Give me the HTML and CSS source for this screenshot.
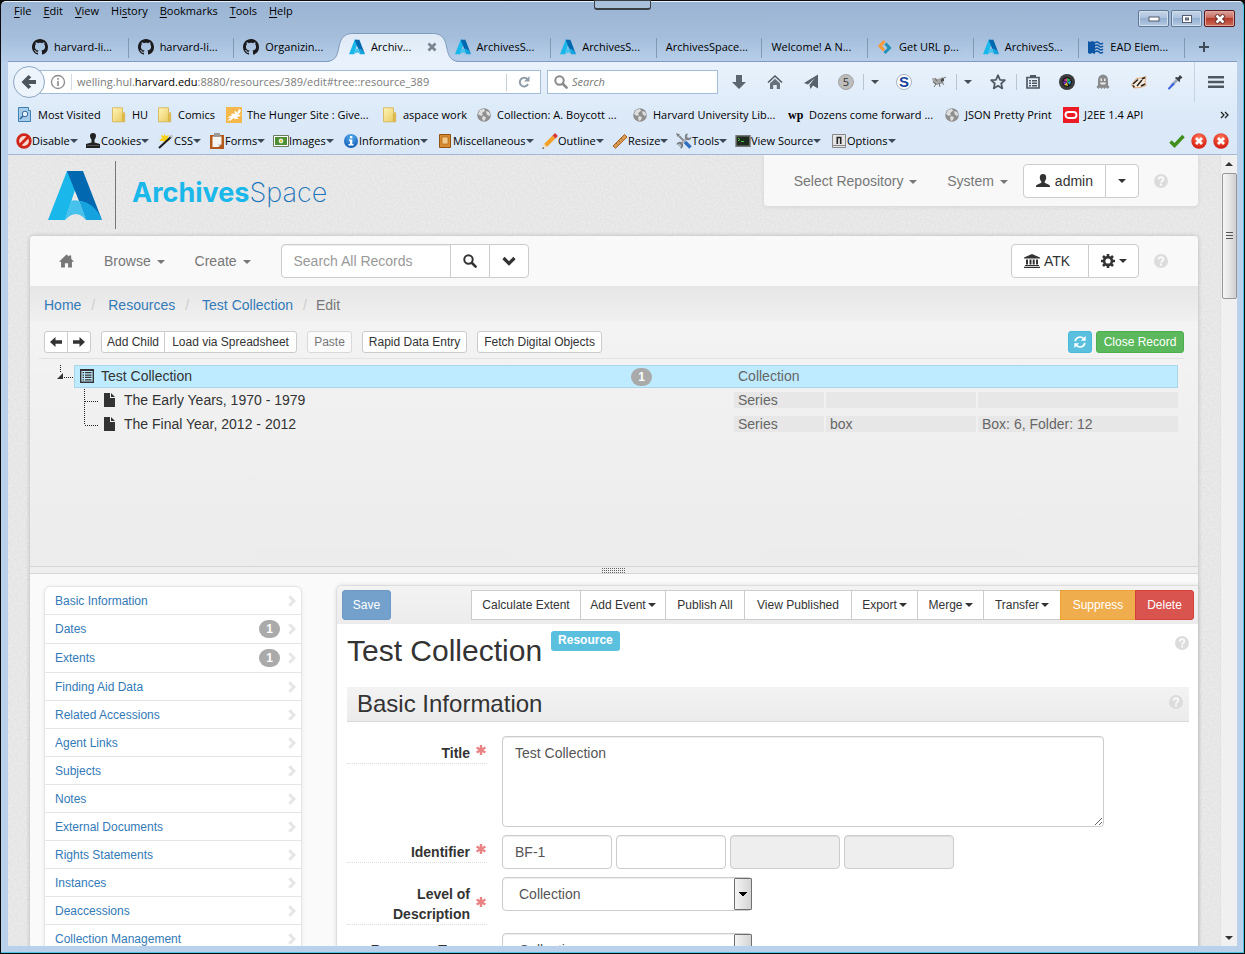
FILE: index.html
```html
<!DOCTYPE html>
<html lang="en">
<head>
<meta charset="utf-8">
<title>ArchivesSpace</title>
<link rel="stylesheet" href="styles.css">
</head>
<body>
<svg class="sprite" aria-hidden="true">
  <defs>
    <linearGradient id="g-tab" x1="0" y1="0" x2="0" y2="1"><stop offset="0" stop-color="#dfeaf6"/><stop offset="1" stop-color="#e9f2fc"/></linearGradient>
    <linearGradient id="g-folder" x1="0" y1="0" x2="1" y2="1"><stop offset="0" stop-color="#fff5b8"/><stop offset="1" stop-color="#e8c95a"/></linearGradient>
    <radialGradient id="g-red" cx=".5" cy=".3" r=".7"><stop offset="0" stop-color="#ff7a5c"/><stop offset="1" stop-color="#d3170c"/></radialGradient>
    <radialGradient id="g-info" cx=".5" cy=".25" r=".8"><stop offset="0" stop-color="#58aef0"/><stop offset="1" stop-color="#0a55ae"/></radialGradient>
  </defs>
  <symbol id="i-github" viewBox="0 0 16 16"><path fill="#1b1a1c" d="M8 0C3.58 0 0 3.58 0 8c0 3.54 2.29 6.53 5.47 7.59.4.07.55-.17.55-.38 0-.19-.01-.82-.01-1.49-2.01.37-2.53-.49-2.69-.94-.09-.23-.48-.94-.82-1.13-.28-.15-.68-.52-.01-.53.63-.01 1.08.58 1.23.82.72 1.21 1.87.87 2.33.66.07-.52.28-.87.51-1.07-1.78-.2-3.64-.89-3.64-3.95 0-.87.31-1.59.82-2.15-.08-.2-.36-1.02.08-2.12 0 0 .67-.21 2.2.82.64-.18 1.32-.27 2-.27s1.36.09 2 .27c1.53-1.04 2.2-.82 2.2-.82.44 1.1.16 1.92.08 2.12.51.56.82 1.27.82 2.15 0 3.07-1.87 3.75-3.65 3.95.29.25.54.73.54 1.48 0 1.07-.01 1.93-.01 2.2 0 .21.15.46.55.38A8.01 8.01 0 0016 8c0-4.42-3.58-8-8-8z"/></symbol>
  <symbol id="i-aspace" viewBox="0 0 54 49"><path fill="#1ab7ea" d="M19 0h8v19L17 49H0z"/><path fill="#0268b0" d="M19 0h16l19 49C48 39 41 31 31 30z"/><path fill="#46c2ec" d="M23 30q4-1.500 8 0l7 19q-10-12-21 0z"/><path fill="#14a3df" d="M31 29.800C41 31 49 37 54 49H38z"/></symbol>
  <symbol id="i-close" viewBox="0 0 10 10"><path stroke="#77838f" stroke-width="2.6" d="M1.500 1.500l7 7M8.500 1.500l-7 7"/></symbol>
  <symbol id="i-geturl" viewBox="0 0 16 16"><path fill="none" stroke="#f79a3a" stroke-width="3" d="M7.500 2L3 7l4 4.500"/><path fill="none" stroke="#2390b8" stroke-width="3" d="M8.500 4.500l4 4.500-5 5"/></symbol>
  <symbol id="i-ead" viewBox="0 0 16 16"><path fill="#0d56a5" d="M0 2l2 1 2-1 3 1v12l-3-1-2 1-2-1z"/><path fill="none" stroke="#0d56a5" stroke-width="1.500" d="M7 4q2-2 4 0t4 0M7 7q2-2 4 0t4 0M7 10q2-2 4 0t4 0M7 13q2-2 4 0t4 0"/></symbol>
  <symbol id="i-plus" viewBox="0 0 12 12"><path stroke="#3e4a59" stroke-width="2" d="M6 1v10M1 6h10"/></symbol>
  <symbol id="i-back" viewBox="0 0 16 16"><path fill="#4c545c" d="M7.500 1l2.800 2.200L7.500 6H15v4H7.500l2.800 2.800L7.500 15l-7-7z"/></symbol>
  <symbol id="i-ident" viewBox="0 0 16 16"><circle cx="8" cy="8" r="6.500" fill="none" stroke="#8b8b8b" stroke-width="1.300"/><path stroke="#8b8b8b" stroke-width="1.600" d="M8 7v5M8 4v1.800"/></symbol>
  <symbol id="i-reload" viewBox="0 0 12 12"><path fill="none" stroke="#909ca8" stroke-width="2" d="M9.500 3.500A4.300 4.300 0 1 0 10 8"/><path fill="#909ca8" d="M11.500 0v5.500H6z"/></symbol>
  <symbol id="i-search" viewBox="0 0 14 14"><circle cx="5.500" cy="5.500" r="4.200" fill="none" stroke="currentColor" stroke-width="2"/><path stroke="currentColor" stroke-width="2.600" stroke-linecap="round" d="M9 9l3.600 3.600"/></symbol>
  <symbol id="i-down" viewBox="0 0 16 16"><path fill="#5b6670" d="M5 1h6v7h4l-7 7-7-7h4z"/></symbol>
  <symbol id="i-fxhome" viewBox="0 0 16 16"><path fill="none" stroke="#4d5862" stroke-width="1.600" d="M1 8.500L8 2l7 6.500"/><path fill="#67727c" d="M3 9.200l5-4.500 5 4.500V15H9.800v-4H6.200v4H3z"/></symbol>
  <symbol id="i-send" viewBox="0 0 16 16"><path fill="#56616b" d="M15 .5v14l-5-3L7.500 15l-1-4L12 4 5 10.500 1 9z"/></symbol>
  <symbol id="i-fly" viewBox="0 0 16 16"><path fill="#a3a4a3" d="M1 4l6 1 5-2 1 2-3 2 3 1-3 2-5 1-3-3z"/><path stroke="#555" fill="none" stroke-width=".8" d="M2 8l3 2-2 3M8 9l1 4M10 7l3 4M4 4l2 3M11 5l4-2"/><circle cx="11.500" cy="6" r="1.600" fill="#444"/></symbol>
  <symbol id="i-fxstar" viewBox="0 0 16 16"><path fill="none" stroke="#4d5862" stroke-width="1.700" stroke-linejoin="round" d="M8 1.200l2 4.600 4.900.4-3.700 3.300 1.100 4.900L8 11.800l-4.300 2.600 1.100-4.900L1.100 6.200 6 5.800z"/></symbol>
  <symbol id="i-clip" viewBox="0 0 16 16"><path fill="none" stroke="#4d5862" stroke-width="1.700" d="M2 3.500h12V14H2z"/><path fill="#4d5862" d="M5 1h6v3H5zM4 6h2v1.500H4zM7 6h5v1.500H7zM4 8.500h2V10H4zM7 8.500h5V10H7zM4 11h2v1.500H4zM7 11h5v1.500H7z"/></symbol>
  <symbol id="i-lens" viewBox="0 0 16 16"><circle cx="8" cy="8" r="8" fill="#3b3b3d"/><circle cx="8" cy="8" r="4.800" fill="#111"/><path fill="#d33a8c" d="M8 8L4.500 6 8 4z"/><path fill="#31b24b" d="M8 8V4l4 2z"/><path fill="#2aa3dd" d="M8 8l4-1-1 4z"/><path fill="#e0c22a" d="M8 8l1 4-4-1z"/><path fill="#7a36c4" d="M8 8l-3 3-1-4z"/></symbol>
  <symbol id="i-ghost" viewBox="0 0 16 16"><path fill="#8a8b8d" d="M3 15V6a5 5.500 0 0 1 10 0v9l-2-1.500L9.500 15 8 13.500 6.500 15 5 13.500zM1.500 13l1.500-2v3.500zM14.500 13L13 11v3.500z"/><path fill="#eee" d="M5.500 4.500h1.500V7H5.500zM9 4.500h1.500V7H9zM5 8.500h6l-1 2H6z"/></symbol>
  <symbol id="i-badger" viewBox="0 0 16 16"><path fill="#f6ece0" stroke="#d58a45" stroke-width=".7" d="M.5 11l5-6.500L10 4l5-1.500-1 5 1 4-6 2-6 .5z"/><path stroke="#2a211b" stroke-width="1.500" fill="none" d="M2 10l5-4.500M6 12l5-6M10 12l4-2M11 5l3-1.500"/><path fill="#2a211b" d="M1 11l3 1-1 2z"/></symbol>
  <symbol id="i-drop" viewBox="0 0 16 16"><path fill="#3d4046" d="M9 3l2 .5L13 1l2.500 2.500L13 5.500V8L11 7 8 4z"/><path stroke="#9aa6bb" stroke-width="2.600" d="M10 6l-6 6"/><path stroke="#3a62e0" stroke-width="2" stroke-linecap="round" d="M6.500 10L2 14.500"/></symbol>
  <symbol id="i-menu" viewBox="0 0 16 14"><path fill="#4d5862" d="M0 1h16v2.600H0zM0 5.700h16v2.600H0zM0 10.400h16V13H0z"/></symbol>
  <symbol id="i-visited" viewBox="0 0 16 16"><path fill="#a8cdea" stroke="#3f7fb2" d="M1.500.5h10v3h2v11h-12z"/><circle cx="8" cy="7" r="2.800" fill="#e4f2fc" stroke="#2e6599"/><path stroke="#2e6599" stroke-width="1.600" d="M6 9l-3 3"/></symbol>
  <symbol id="i-folder" viewBox="0 0 16 16"><path fill="url(#g-folder)" stroke="#d3b04c" stroke-width=".8" d="M1.500.8h10v5h2.200v9H1.500z"/><path fill="#dcb749" d="M10.800 6.500h2.600v8h-2.600z"/></symbol>
  <symbol id="i-hunger" viewBox="0 0 16 16"><path fill="#f5b84c" d="M0 0h16v16H0z"/><path fill="#fff" d="M1 13.500c2-1 3-2 4-3l-3 .5c1-2 3-2.500 4-2L5 7c2-1 3-.5 4 .5L8.500 4c2 0 2.500 1 2.500 2.500L13 2l2 1c-.5 2-2 4-3 5l3-.5c-1 2-3 2.500-4.500 2.500l2 1.500c-2 1-4 .5-5-.5l-3 2.500z"/></symbol>
  <symbol id="i-globe" viewBox="0 0 16 16"><circle cx="8" cy="8" r="6.800" fill="#8f8f8f"/><path fill="#dedede" d="M4 3l4-1.200L9 4 6 6l1 2-2 1-3-2zM10 4l3 1 1.500 3-2 1-2-2zM7 9l3 1-1 3-2 1-1-3z"/></symbol>
  <symbol id="i-oracle" viewBox="0 0 16 16"><path fill="#ec1c24" d="M0 0h16v16H0z"/><rect x="2.500" y="5" width="11" height="6" rx="3" fill="none" stroke="#fff" stroke-width="1.900"/></symbol>
  <symbol id="i-disable" viewBox="0 0 16 16"><circle cx="8" cy="8" r="6.300" fill="#f8d8d0" stroke="#cf2519" stroke-width="2.800"/><path stroke="#cf2519" stroke-width="2.800" d="M3.500 12.500l9-9"/></symbol>
  <symbol id="i-cookies" viewBox="0 0 16 16"><path fill="#222" d="M5 3a3 3 0 0 1 6 0c0 2-1.500 3-1.500 4v2.500L15 11v4H1v-4l5.500-1.500V7C6.500 6 5 5 5 3z"/><path fill="#555" d="M2 12h12v1H2z"/></symbol>
  <symbol id="i-css" viewBox="0 0 16 16"><path fill="#f9d11c" d="M6 0l1.500 3L11 2 9.500 5.500 12 8 8.500 8 7 11 5.500 8 1 8l3-3-1-3 3 1z"/><path stroke="#1d1d1d" stroke-width="2" d="M1 15L14 3"/><path stroke="#ddd" stroke-width="1.600" d="M12.500 4.500L15 2"/></symbol>
  <symbol id="i-forms" viewBox="0 0 16 16"><path fill="#b3591b" d="M1 2h14v14H1z"/><path fill="#f4f4f2" d="M3.500 3.500h9V11l-3 3h-6z"/><path fill="#9a9a98" d="M5 0h6v4H5z"/><path fill="#ccc" d="M9.500 14v-3h3z"/></symbol>
  <symbol id="i-images" viewBox="0 0 16 16"><path fill="#fff" stroke="#6c7a5c" d="M.5 2.500h15v11H.5z"/><path fill="#4e8f35" d="M2 4h12v8H2z"/><circle cx="8" cy="8" r="2.400" fill="#dfe8d0"/><circle cx="8" cy="8" r="1" fill="#f0c419"/></symbol>
  <symbol id="i-info" viewBox="0 0 16 16"><circle cx="8" cy="8" r="7" fill="url(#g-info)"/><path fill="#fff" d="M7 3h2.300v2.200H7zM6 6.500h3.300V11H10.500v1.500h-5V11H7V8H6z"/></symbol>
  <symbol id="i-misc" viewBox="0 0 16 16"><path fill="#d98a2e" stroke="#8d5414" d="M2.500 1.500h11v13h-11z"/><path fill="#f4c888" stroke="#a9671c" stroke-width=".7" d="M5 4h6v7H5z"/></symbol>
  <symbol id="i-outline" viewBox="0 0 16 16"><path stroke="#f2a02a" stroke-width="4" d="M3.500 12.500L12 4"/><path fill="#f7dcb4" d="M2 11l3 3-4.500 1.700z"/><path stroke="#d9363a" stroke-width="4" d="M12 4l2.500-2.500"/><path fill="#333" d="M.3 16l.7-2 1.200 1.300z"/></symbol>
  <symbol id="i-resize" viewBox="0 0 16 16"><path fill="#dd9b52" stroke="#a3642a" d="M1 13L12.500 1.500 15 4 3.500 15.300z"/><path stroke="#8b5420" stroke-width=".8" d="M4 10l1.500 1.500M6.500 7.500L8 9M9 5l1.500 1.500"/></symbol>
  <symbol id="i-tools" viewBox="0 0 16 16"><path stroke="#878c91" stroke-width="2" d="M3 3l6 6"/><path stroke="#2f6fc2" stroke-width="3.400" d="M9 9l5.500 5.500"/><path stroke="#a8adb1" stroke-width="2.200" d="M12 4l-9 9"/><path fill="none" stroke="#777c81" stroke-width="1.800" d="M11.500 1.200A2.600 2.600 0 1 0 14.800 4.500M1.200 11.500a2.600 2.600 0 1 1 3.300 3.300"/><path fill="#777c81" d="M0 0l4 1.500L1.500 4z"/></symbol>
  <symbol id="i-source" viewBox="0 0 16 16"><path fill="#1f2a1f" stroke="#777" stroke-width="1.400" d="M1 2.700h14v10.600H1z"/><path fill="none" stroke="#49c13a" d="M3 5l2 1.500L3 8M6 8.500h3"/></symbol>
  <symbol id="i-options" viewBox="0 0 16 16"><path fill="#e5e5e5" stroke="#888" d="M1.500 1.500h13v13h-13z"/><path fill="none" stroke="#222" stroke-width="1.600" d="M6.300 11V4.500h3.400V11"/><path stroke="#888" d="M2 12.500h12"/></symbol>
  <symbol id="i-ok" viewBox="0 0 16 16"><path fill="none" stroke="#3f8f1a" stroke-width="3.400" d="M1.500 8.500L5.500 12.500 14.500 3"/></symbol>
  <symbol id="i-err" viewBox="0 0 16 16"><circle cx="8" cy="8" r="7.700" fill="url(#g-red)"/><path stroke="#fff" stroke-width="2.800" d="M5 5l6 6M11 5l-6 6"/></symbol>
  <symbol id="i-home" viewBox="0 0 16 14"><path fill="currentColor" d="M8 0l2.500 2.300V1H13v3.600L16 7.700h-2.200V14H9.700V9.500H6.300V14H2.200V7.700H0z"/></symbol>
  <symbol id="i-user" viewBox="0 0 14 14"><path fill="currentColor" d="M7 0c2.400 0 3.300 1.700 3.200 3.800-.1 1.800-.8 2.900-1.500 3.700v1.200l4.200 2c.8.400 1.100.9 1.100 1.700V13H0v-.6c0-.8.300-1.300 1.100-1.700l4.200-2V7.500C4.600 6.700 3.900 5.600 3.800 3.800 3.700 1.700 4.600 0 7 0z"/></symbol>
  <symbol id="i-help" viewBox="0 0 14 14"><circle cx="7" cy="7" r="7" fill="#dcdcdc"/><path fill="none" stroke="#fafafa" stroke-width="1.900" d="M4.700 5.500c0-3 4.700-2.800 4.700-.2C9.400 7 7.200 6.800 7.100 8.800"/><path fill="#fafafa" d="M6 9.600h2.100v1.900H6z"/></symbol>
  <symbol id="i-chevdown" viewBox="0 0 14 10"><path fill="none" stroke="currentColor" stroke-width="3.200" d="M1.500 2L7 7.500 12.500 2"/></symbol>
  <symbol id="i-bank" viewBox="0 0 16 14"><path fill="currentColor" d="M8 0l8 3.500v1H0v-1zM2 5.500h2v5H2zM5.500 5.500h2v5h-2zM8.700 5.500h2v5h-2zM12 5.500h2v5h-2zM1 11h14v1H1zM0 12.800h16V14H0z"/></symbol>
  <symbol id="i-gear" viewBox="0 0 14 14"><circle cx="7" cy="7" r="3.900" fill="none" stroke="currentColor" stroke-width="2.600"/><path stroke="currentColor" stroke-width="2.600" d="M7 0v2.500M7 11.500V14M0 7h2.500M11.500 7H14M2 2l2 2M10 10l2 2M12 2l-2 2M4 10l-2 2"/></symbol>
  <symbol id="i-left" viewBox="0 0 12 10"><path fill="currentColor" d="M5.500 0v3.300H12v3.400H5.500V10L0 5z"/></symbol>
  <symbol id="i-right" viewBox="0 0 12 10"><path fill="currentColor" d="M6.500 0v3.300H0v3.400h6.500V10L12 5z"/></symbol>
  <symbol id="i-refresh" viewBox="0 0 12 12"><path fill="none" stroke="#fff" stroke-width="1.700" d="M1.200 5.200A4.800 4.800 0 0 1 9.600 2.700M10.800 6.800A4.800 4.800 0 0 1 2.400 9.300"/><path fill="#fff" d="M11.700 0v4.800H6.900zM.3 12V7.200h4.800z"/></symbol>
  <symbol id="i-list" viewBox="0 0 14 14"><path fill="currentColor" fill-rule="evenodd" d="M0 0h14v14H0zM1.400 2v10.600h11.200V2z"/><path fill="currentColor" d="M2.500 3h1.500v1.300H2.500zM5 3h6.500v1.300H5zM2.500 5.400h1.500v1.300H2.500zM5 5.400h6.500v1.300H5zM2.500 7.800h1.500v1.300H2.500zM5 7.800h6.500v1.300H5zM2.500 10.200h1.500v1.300H2.500zM5 10.200h6.500v1.300H5z"/></symbol>
  <symbol id="i-file" viewBox="0 0 11 14"><path fill="currentColor" d="M0 0h6v5h5v9H0zM7 0l4 4H7z"/></symbol>
  <symbol id="i-req" viewBox="0 0 10 10"><path stroke="#ea8383" stroke-width="2.400" d="M5 0v10M.6 2.500l8.800 5M9.400 2.500l-8.800 5"/></symbol>
</svg>

<div class="window">
  <header class="titlebar">
    <div class="menurow">
      <nav class="menus" aria-label="Menu bar">
        <button><u>F</u>ile</button><button><u>E</u>dit</button><button><u>V</u>iew</button><button>Hi<u>s</u>tory</button><button><u>B</u>ookmarks</button><button><u>T</u>ools</button><button><u>H</u>elp</button>
      </nav>
      <div class="controls">
        <button class="ctl" aria-label="Minimize"><svg width="12" height="6"><rect x="1" y="1" width="10" height="4" fill="#fff" stroke="#555c6a"/></svg></button>
        <button class="ctl" aria-label="Maximize"><svg width="12" height="10"><rect x="1.500" y="1.500" width="9" height="7" fill="#fff" stroke="#555c6a"/><rect x="4.500" y="4" width="3" height="2" fill="#8ca3c0" stroke="#555c6a"/></svg></button>
        <button class="ctl ctl-close" aria-label="Close"><svg width="12" height="10"><path stroke="#5a2a2a" stroke-width="4.400" d="M2 1l8 8M10 1L2 9"/><path stroke="#fff" stroke-width="2.600" d="M2.500 1.500l7 7M9.500 1.500l-7 7"/></svg></button>
      </div>
      <span class="notch"></span>
    </div>
    <div class="tabs">
      <a class="tab" href="#"><svg class="ic"><use href="#i-github"/></svg><span>harvard-li...</span></a>
      <a class="tab" href="#"><svg class="ic"><use href="#i-github"/></svg><span>harvard-li...</span></a>
      <a class="tab before" href="#"><svg class="ic"><use href="#i-github"/></svg><span>Organizin...</span></a>
      <a class="tab active" href="#"><svg class="tabshape" viewBox="0 0 134 29" preserveAspectRatio="none" aria-hidden="true"><path fill="url(#g-tab)" d="M0 29C9 28 11 24 13 14 15 4 19 .5 27 .5h80c8 0 12 3.500 14 13.500s4 14 13 15z"/><path fill="none" stroke="#7f9cbd" d="M0 28.500C9 28 11 24 13 14 15 4 19 .5 27 .5h80c8 0 12 3.500 14 13.500s4 14 13 14.500"/></svg><svg class="ic"><use href="#i-aspace"/></svg><span>Archiv...</span><svg class="ic-x"><use href="#i-close"/></svg></a>
      <a class="tab" href="#"><svg class="ic"><use href="#i-aspace"/></svg><span>ArchivesS...</span></a>
      <a class="tab" href="#"><svg class="ic"><use href="#i-aspace"/></svg><span>ArchivesS...</span></a>
      <a class="tab" href="#"><span>ArchivesSpace...</span></a>
      <a class="tab" href="#"><span>Welcome! A N...</span></a>
      <a class="tab" href="#"><svg class="ic"><use href="#i-geturl"/></svg><span>Get URL p...</span></a>
      <a class="tab" href="#"><svg class="ic"><use href="#i-aspace"/></svg><span>ArchivesS...</span></a>
      <a class="tab" href="#"><svg class="ic"><use href="#i-ead"/></svg><span>EAD Elem...</span></a>
      <button class="newtab" aria-label="New tab"><svg width="12" height="12"><use href="#i-plus"/></svg></button>
    </div>
  </header>

  <div class="inner">
    <div class="toolbox">
      <div class="navbar">
        <button class="back" aria-label="Back"><svg class="ic"><use href="#i-back"/></svg></button>
        <div class="urlbar"><svg class="ic"><use href="#i-ident"/></svg><span class="url">welling.hul.<b>harvard.edu</b>:8880/resources/389/edit#tree::resource_389</span><button class="reload" aria-label="Reload"><svg width="12" height="12"><use href="#i-reload"/></svg></button></div>
        <div class="fxsearch"><svg width="14" height="14"><use href="#i-search"/></svg><input type="text" placeholder="Search" aria-label="Web search"></div>
        <div class="fxicons">
          <button aria-label="Downloads"><svg class="ic"><use href="#i-down"/></svg></button>
          <button aria-label="Home page"><svg class="ic"><use href="#i-fxhome"/></svg></button>
          <button aria-label="Share"><svg class="ic"><use href="#i-send"/></svg></button>
          <button class="slim" aria-label="Counter"><span class="five">5</span></button>
          <button class="drop" aria-label="Counter menu"><i class="caret"></i></button>
          <button aria-label="S add-on"><span class="esse">S</span></button>
          <button class="slim" aria-label="Firebug"><svg class="ic"><use href="#i-fly"/></svg></button>
          <button class="drop" aria-label="Firebug menu"><i class="caret"></i></button>
          <button class="star" aria-label="Bookmark this page"><svg class="ic"><use href="#i-fxstar"/></svg></button>
          <button class="split" aria-label="Show bookmarks"><svg class="ic"><use href="#i-clip"/></svg></button>
          <button aria-label="Lens add-on"><svg class="ic"><use href="#i-lens"/></svg></button>
          <button aria-label="Ghostery"><svg class="ic"><use href="#i-ghost"/></svg></button>
          <button aria-label="Privacy Badger"><svg class="ic"><use href="#i-badger"/></svg></button>
          <button aria-label="Colour picker"><svg class="ic"><use href="#i-drop"/></svg></button>
          <button class="burger" aria-label="Open menu"><svg width="16" height="14"><use href="#i-menu"/></svg></button>
        </div>
      </div>
      <nav class="bookmarks" aria-label="Bookmarks">
        <a href="#"><svg class="ic"><use href="#i-visited"/></svg>Most Visited</a>
        <a href="#"><svg class="ic"><use href="#i-folder"/></svg>HU</a>
        <a href="#"><svg class="ic"><use href="#i-folder"/></svg>Comics</a>
        <a href="#"><svg class="ic"><use href="#i-hunger"/></svg>The Hunger Site : Give...</a>
        <a href="#"><svg class="ic"><use href="#i-folder"/></svg>aspace work</a>
        <a href="#"><svg class="ic"><use href="#i-globe"/></svg>Collection: A. Boycott ...</a>
        <a href="#"><svg class="ic"><use href="#i-globe"/></svg>Harvard University Lib...</a>
        <a href="#"><span class="wapo">wp</span>Dozens come forward ...</a>
        <a href="#"><svg class="ic"><use href="#i-globe"/></svg>JSON Pretty Print</a>
        <a href="#"><svg class="ic"><use href="#i-oracle"/></svg>J2EE 1.4 API</a>
        <button aria-label="More bookmarks"><svg width="9" height="8"><path fill="none" stroke="#222" stroke-width="1.300" d="M1 1l3 3-3 3M5 1l3 3-3 3"/></svg></button>
      </nav>
      <div class="devbar">
        <button><svg class="ic"><use href="#i-disable"/></svg>Disable<i class="caret"></i></button>
        <button><svg class="ic"><use href="#i-cookies"/></svg>Cookies<i class="caret"></i></button>
        <button><svg class="ic"><use href="#i-css"/></svg>CSS<i class="caret"></i></button>
        <button><svg class="ic"><use href="#i-forms"/></svg>Forms<i class="caret"></i></button>
        <button><svg class="ic"><use href="#i-images"/></svg>Images<i class="caret"></i></button>
        <button><svg class="ic"><use href="#i-info"/></svg>Information<i class="caret"></i></button>
        <button><svg class="ic"><use href="#i-misc"/></svg>Miscellaneous<i class="caret"></i></button>
        <button><svg class="ic"><use href="#i-outline"/></svg>Outline<i class="caret"></i></button>
        <button><svg class="ic"><use href="#i-resize"/></svg>Resize<i class="caret"></i></button>
        <button><svg class="ic"><use href="#i-tools"/></svg>Tools<i class="caret"></i></button>
        <button><svg class="ic"><use href="#i-source"/></svg>View Source<i class="caret"></i></button>
        <button><svg class="ic"><use href="#i-options"/></svg>Options<i class="caret"></i></button>
        <span class="status"><svg class="ic"><use href="#i-ok"/></svg><svg class="ic"><use href="#i-err"/></svg><svg class="ic"><use href="#i-err"/></svg></span>
      </div>
    </div>

    <div class="viewport">
      <div class="page">
        <div class="masthead">
          <a class="brand" href="#"><svg class="logo"><use href="#i-aspace"/></svg><span class="rule"></span><span class="name"><b>Archives</b>Space</span></a>
          <nav class="globalnav" aria-label="Global">
            <a href="#">Select Repository <i class="caret"></i></a>
            <a href="#">System <i class="caret"></i></a>
            <span class="group"><button class="btn"><svg width="14" height="14"><use href="#i-user"/></svg>admin</button><button class="btn btn-caret" aria-label="User menu"><i class="caret"></i></button></span>
            <button class="help" aria-label="Help"><svg width="14" height="14"><use href="#i-help"/></svg></button>
          </nav>
        </div>

        <div class="container">
          <nav class="mainnav" aria-label="Main">
            <a href="#" aria-label="Home"><svg width="15" height="14"><use href="#i-home"/></svg></a>
            <a href="#">Browse <i class="caret"></i></a>
            <a href="#">Create <i class="caret"></i></a>
            <span class="group"><input class="field" type="text" placeholder="Search All Records" aria-label="Search all records"><button class="btn btn-search" aria-label="Search"><svg width="14" height="14"><use href="#i-search"/></svg></button><button class="btn btn-search" aria-label="Advanced search"><svg width="14" height="10"><use href="#i-chevdown"/></svg></button></span>
            <span class="group push"><button class="btn btn-repo"><svg width="16" height="14"><use href="#i-bank"/></svg>ATK</button><button class="btn btn-gear" aria-label="Settings"><svg width="14" height="14"><use href="#i-gear"/></svg><i class="caret"></i></button></span>
            <button class="help" aria-label="Help"><svg width="14" height="14"><use href="#i-help"/></svg></button>
          </nav>
          <ol class="crumbs"><li><a href="#">Home</a></li><li><a href="#">Resources</a></li><li><a href="#">Test Collection</a></li><li>Edit</li></ol>

          <section class="treepane">
            <div class="treebar">
              <span class="group"><button class="xs" aria-label="Previous"><svg width="12" height="10"><use href="#i-left"/></svg></button><button class="xs" aria-label="Next"><svg width="12" height="10"><use href="#i-right"/></svg></button></span>
              <span class="group"><button class="xs">Add Child</button><button class="xs w-load">Load via Spreadsheet</button></span>
              <button class="xs w-paste" disabled>Paste</button>
              <button class="xs w-rapid">Rapid Data Entry</button>
              <button class="xs w-fetch">Fetch Digital Objects</button>
              <span class="pair push"><button class="xs info" aria-label="Refresh"><svg width="12" height="12"><use href="#i-refresh"/></svg></button><button class="xs success">Close Record</button></span>
            </div>
            <div class="tree" role="tree">
              <div class="row" role="treeitem">
                <svg class="joint" width="17" height="24"><path fill="none" stroke="#222" stroke-dasharray="1 1" d="M3.500 0v8M7 12.500h10"/><path fill="#333" d="M6 8v6H0z"/></svg>
                <div class="node selected"><svg width="14" height="14"><use href="#i-list"/></svg><span>Test Collection</span><span class="badge">1</span><div class="cells"><span>Collection</span><span></span><span></span></div></div>
              </div>
              <div class="row" role="treeitem">
                <svg class="joint child" width="14" height="24"><path fill="none" stroke="#222" stroke-dasharray="1 1" d="M.5 0v24M1 12.500h13"/></svg>
                <div class="node"><svg width="11" height="14"><use href="#i-file"/></svg><span>The Early Years, 1970 - 1979</span><div class="cells"><span>Series</span><span></span><span></span></div></div>
              </div>
              <div class="row" role="treeitem">
                <svg class="joint child" width="14" height="24"><path fill="none" stroke="#222" stroke-dasharray="1 1" d="M.5 0v12M1 12.500h13"/></svg>
                <div class="node"><svg width="11" height="14"><use href="#i-file"/></svg><span>The Final Year, 2012 - 2012</span><div class="cells"><span>Series</span><span>box</span><span>Box: 6, Folder: 12</span></div></div>
              </div>
            </div>
          </section>
          <div class="resizer"><span></span></div>

          <div class="record">
            <ul class="sidenav">
              <li><a href="#">Basic Information</a></li>
              <li class="counted"><a href="#">Dates<span class="badge">1</span></a></li>
              <li class="counted"><a href="#">Extents<span class="badge">1</span></a></li>
              <li><a href="#">Finding Aid Data</a></li>
              <li><a href="#">Related Accessions</a></li>
              <li><a href="#">Agent Links</a></li>
              <li><a href="#">Subjects</a></li>
              <li><a href="#">Notes</a></li>
              <li><a href="#">External Documents</a></li>
              <li><a href="#">Rights Statements</a></li>
              <li><a href="#">Instances</a></li>
              <li><a href="#">Deaccessions</a></li>
              <li><a href="#">Collection Management</a></li>
            </ul>
            <main class="editor">
              <div class="actions">
                <button class="sm primary">Save</button>
                <div class="actiongrid push">
                  <button class="sm">Calculate Extent</button><button class="sm">Add Event<i class="caret"></i></button><button class="sm">Publish All</button><button class="sm">View Published</button><button class="sm">Export<i class="caret"></i></button><button class="sm">Merge<i class="caret"></i></button><button class="sm">Transfer<i class="caret"></i></button><button class="sm warning">Suppress</button><button class="sm danger">Delete</button>
                </div>
              </div>
              <form class="form">
                <div class="heading"><h2>Test Collection</h2><span class="label">Resource</span><button type="button" class="help push" aria-label="Help"><svg width="14" height="14"><use href="#i-help"/></svg></button></div>
                <div class="section"><h3>Basic Information</h3><button type="button" class="help push" aria-label="Help"><svg width="14" height="14"><use href="#i-help"/></svg></button></div>
                <div class="frow"><label for="title">Title<svg class="req"><use href="#i-req"/></svg></label><textarea id="title" class="field">Test Collection</textarea></div>
                <div class="frow"><label for="id0">Identifier<svg class="req"><use href="#i-req"/></svg></label><div class="ids"><input id="id0" class="field" value="BF-1"><input class="field" aria-label="Identifier part 2"><input class="field" disabled aria-label="Identifier part 3"><input class="field" disabled aria-label="Identifier part 4"></div></div>
                <div class="frow"><label for="level"><span>Level of Description</span><svg class="req mid"><use href="#i-req"/></svg></label><span class="pick"><select id="level" class="field"><option>Collection</option></select></span></div>
                <div class="frow"><label for="rtype">Resource Type</label><span class="pick"><select id="rtype" class="field"><option>Collection</option></select></span></div>
              </form>
            </main>
          </div>
        </div>
      </div>
      <div class="scrollbar" aria-hidden="true"><i class="up"></i><span class="thumb"><b></b></span><i class="dn"></i></div>
    </div>
  </div>
</div>
</body>
</html>
```

FILE: styles.css
```css
*, *::before, *::after { box-sizing: border-box; }
body { margin: 0; background: #0b0b0b; font: 14px/20px "Liberation Sans", Arial, sans-serif; color: #333; }
button, input, select, textarea { font: inherit; color: inherit; margin: 0; }
button { border: 0; background: none; padding: 0; display: inline-flex; align-items: center; justify-content: center; white-space: nowrap; }
a { color: inherit; text-decoration: none; }
svg { display: block; flex: none; }
.sprite { position: absolute; width: 0; height: 0; }
.ic { width: 16px; height: 16px; }
.push { margin-left: auto; }
.caret { width: 0; height: 0; border: 4px solid transparent; border-top-color: currentColor; border-bottom: 0; display: inline-block; vertical-align: middle; flex: none; }

/* window frame */
.window { height: 100vh; display: flex; flex-direction: column; padding: 1px; background: #0b0b0b; }
.titlebar, .inner { border: solid #4cc3e0; border-width: 0 1px 0 0; }
.titlebar { flex: none; background: linear-gradient(#9ab4d3, #a5bedb 60%, #b7cfea); border-top: 1px solid #e8f1fa; border-radius: 5px 5px 0 0; font: 11px/16px "Open Sans", sans-serif; color: #000; padding: 0 6px 0 7px; }
.inner { flex: 1; min-height: 0; display: flex; flex-direction: column; background: #b9d1ea; padding: 0 6px 6px 7px; border-bottom-width: 1px; }

.menurow { position: relative; height: 31px; display: flex; justify-content: space-between; align-items: flex-start; }
.menus { display: flex; gap: 12px; padding: 1px 0 0 6px; }
.menus u { text-underline-offset: 2px; }
.controls { display: flex; gap: 2px; padding: 8px 2px 0 0; }
.ctl { width: 31px; height: 17px; border: 1px solid #5f7896; border-radius: 2px; background: linear-gradient(#c6d6e8, #a9c0dc 50%, #95b0d0 50%, #b4cae4); box-shadow: inset 0 0 0 1px #d3e0ee; }
.ctl-close { border-color: #5a1a1c; background: linear-gradient(#dba39b, #c9665a 50%, #b33b2b 50%, #cd6a56); box-shadow: inset 0 0 0 1px #e0a89f; }
.notch { position: absolute; left: 586px; top: -2px; width: 57px; height: 10px; border: 1px solid #3b4047; border-width: 1px 1px 2px; border-radius: 0 0 3px 3px; background: #a9c0dc; }

.tabs { display: grid; grid-template-columns: repeat(11, minmax(0, 1fr)) 38px; height: 29px; padding: 0 14px 0 15px; border-bottom: 1px solid #7f9cbd; }
.tab { position: relative; display: flex; align-items: center; gap: 6px; padding: 0 9px; white-space: nowrap; }
.tab::after { content: ""; position: absolute; right: 0; top: 5px; height: 20px; width: 1px; background: #8099b5; }
.tab.before::after, .tab.active::after { display: none; }
.tab > span, .tab > .ic, .ic-x { position: relative; }
.tabshape { position: absolute; left: -14px; top: 0; width: calc(100% + 28px); height: 29px; }
.ic-x { width: 10px; height: 10px; margin-left: auto; }

/* toolbars */
.toolbox { flex: none; background: linear-gradient(#e9f2fc, #dbe9f8 60%, #d9e7f6); border-bottom: 1px solid #a3b9d3; font: 11px/16px "Open Sans", sans-serif; color: #000; }
.navbar { display: flex; align-items: center; height: 40px; padding-left: 5px; }
.back { position: relative; z-index: 1; width: 32px; height: 32px; border: 1px solid #8da6c4; border-radius: 50%; background: #eef4fb; flex: none; }
.urlbar { flex: 1; margin-left: -6px; height: 24px; display: flex; align-items: center; border: 1px solid #a3bdd8; background: #fff; padding-left: 10px; color: #7b7b7b; }
.urlbar .url { flex: 1; margin-left: 5px; padding-left: 5px; border-left: 1px solid #d5dbe2; white-space: nowrap; }
.urlbar b { font-weight: 400; color: #000; }
.reload { width: 34px; height: 17px; border-left: 1px solid #c8d0d8; }
.fxsearch { width: 171px; height: 24px; margin: 0 3px 0 6px; display: flex; align-items: center; gap: 4px; padding-left: 6px; border: 1px solid #a3bdd8; background: #fff; color: #8a8a8a; }
.fxsearch input { border: 0; background: none; width: 140px; padding: 0; font-style: italic; }
.fxsearch input::placeholder { color: #777; }
.fxicons { display: flex; align-items: center; color: #444c55; }
.fxicons button { width: 36px; height: 20px; }
.fxicons .slim { width: 34px; }
.fxicons .star { width: 37px; }
.fxicons .drop { width: 23px; height: 16px; border-left: 1px solid #b8c5d4; }
.fxicons .split { border-left: 1px solid #b8c5d4; height: 16px; width: 33px; }
.fxicons .burger { width: 43px; height: 40px; border-left: 1px solid #c5d3e2; margin-left: 1px; }
.five, .esse { width: 16px; height: 16px; border-radius: 50%; text-align: center; }
.five { background: #bdbdbd; border: 1px solid #a4a4a4; line-height: 14px; color: #333; }
.esse { background: #fdfdfd; border: 1px solid #a9b3c2; font: bold 15px/14px "Liberation Sans", sans-serif; color: #16449b; }
.wapo { width: 16px; font: bold 12px/16px "Liberation Serif", serif; }
.bookmarks { display: grid; grid-template-columns: 94px 46px 69px 156px 94px 156px 156px 156px 119px 1fr 24px; align-items: center; height: 26px; padding: 0 1px 0 9px; white-space: nowrap; }
.bookmarks a, .devbar button { display: flex; align-items: center; justify-content: flex-start; }
.bookmarks a { gap: 5px; }
.devbar { display: grid; grid-template-columns: 69px 73px 51px 64px 70px 94px 105px 70px 64px 59px 96px auto 1fr; align-items: center; height: 26px; padding: 0 8px; }
.devbar .caret { color: #3c4854; }
.status { display: flex; justify-content: flex-end; gap: 6px; }

/* page */
.viewport { flex: 1; min-height: 0; display: flex; background: #ececec; }
.page { flex: 1; min-width: 0; overflow: hidden; padding: 0 22px; background: #ebebeb url("data:image/svg+xml,%3Csvg xmlns='http://www.w3.org/2000/svg' width='160' height='160'%3E%3Cfilter id='n'%3E%3CfeTurbulence type='fractalNoise' baseFrequency='.5' numOctaves='2' stitchTiles='stitch'/%3E%3CfeColorMatrix values='0 0 0 0 0 0 0 0 0 0 0 0 0 0 0 .07 0 0 0 -.02'/%3E%3C/filter%3E%3Crect width='160' height='160' filter='url(%23n)'/%3E%3C/svg%3E"); }
.masthead { display: flex; justify-content: space-between; align-items: flex-start; height: 81px; }
.brand { display: flex; align-items: flex-start; padding: 6px 0 0 18px; }
.logo { width: 54px; height: 49px; margin-top: 10px; }
.rule { width: 1px; height: 68px; background: #777; margin: 0 16px 0 13px; }
.name { font: 200 27px/36px Inter, sans-serif; color: #1b74b8; margin-top: 14px; }
.name b { font-weight: 700; color: #1ab7ea; }
.globalnav { display: flex; align-items: center; height: 51px; padding: 0 30px; background: #f8f8f8; border-radius: 0 0 4px 4px; box-shadow: 0 1px 5px rgba(0,0,0,.08); color: #777; }
.globalnav > a + a { margin-left: 30px; }
.globalnav .group { margin-left: 15px; }
.globalnav a .caret, .mainnav a .caret { margin-left: 2px; }
.group { display: inline-flex; }
.btn { height: 34px; border: 1px solid #ccc; background: #fff; color: #333; border-radius: 4px; padding: 0 12px; gap: 5px; }
.group > * + * { margin-left: -1px; }
.group > :not(:last-child) { border-top-right-radius: 0; border-bottom-right-radius: 0; }
.group > :not(:first-child) { border-top-left-radius: 0; border-bottom-left-radius: 0; }
.btn-caret { width: 34px; }
.help { margin-left: 15px; width: 14px; height: 14px; flex: none; }
.help.push { margin-left: auto; }

.container { background: #fafafa; border-radius: 4px 4px 0 0; box-shadow: 0 0 4px rgba(0,0,0,.22); }
.mainnav { display: flex; align-items: center; gap: 30px; height: 50px; padding: 0 30px 0 29px; color: #777; background: #f9f9f9; border-radius: 4px 4px 0 0; }
.field { border: 1px solid #ccc; border-radius: 4px; background: #fff; box-shadow: inset 0 1px 1px rgba(0,0,0,.075); color: #555; height: 34px; padding: 6px 12px; }
.mainnav .field { width: 170px; }
.field::placeholder { color: #999; }
.btn-search { width: 40px; }
.mainnav .help { margin-left: -15px; }
.btn-repo { width: 78px; justify-content: flex-start; gap: 4px; }
.btn-gear { width: 51px; gap: 4px; }
.crumbs { display: flex; align-items: center; list-style: none; margin: 0; height: 35px; padding: 2px 14px 0; background: linear-gradient(#e6e6e6, #f0f0f0); color: #777; }
.crumbs a { color: #337ab7; }
.crumbs li + li::before { content: "/"; color: #ccc; margin: 0 13px 0 10px; }
.crumbs li:last-child::before { margin-right: 9px; }

.treepane { background: linear-gradient(#f3f3f3, #ececec); height: 245px; padding: 0 14px 0 9px; }
.treebar { display: flex; align-items: center; gap: 10px; height: 38px; padding: 4px 0 0 5px; border-bottom: 1px solid #e3e3e3; }
.xs { height: 22px; padding: 0 5px; font-size: 12px; line-height: 18px; background: #fff; border: 1px solid #ccc; border-radius: 3px; color: #333; }
.xs:disabled { opacity: .65; }
.pair { display: flex; gap: 4px; }
.xs.info { background: #5bc0de; border-color: #46b8da; }
.xs.success { background: #5cb85c; border-color: #4cae4c; color: #fff; min-width: 88px; }
.w-load { min-width: 133px; }
.w-paste { min-width: 45px; }
.w-rapid { min-width: 105px; }
.w-fetch { min-width: 125px; }
.tree { padding: 6px 6px 0 18px; }
.row { display: flex; height: 24px; }
.joint.child { margin-left: 27px; }
.node { flex: 1; display: flex; align-items: center; gap: 9px; padding: 0 0 2px 6px; }
.selected { background: #beebff; border: 1px solid #a9d6ea; height: 23px; padding: 0 0 1px 5px; gap: 7px; }
.badge { min-width: 21px; padding: 3px 7px; font: bold 12px/12px "Liberation Sans", sans-serif; color: #fff; background: #aaa; border-radius: 10px; text-align: center; }
.selected .badge { margin: 2px 75px 0 auto; }
.cells { display: grid; grid-template-columns: 90px 150px 200px; gap: 2px; margin-left: auto; color: #666; }
.cells span { background: #e7e7e7; height: 16px; line-height: 16px; padding-left: 4px; }
.selected .cells { margin: 0 -1px 0 0; }
.selected .cells span { background: none; }
.resizer { height: 8px; border: 1px solid #d6d6d6; border-width: 1px 0; background: #eee; display: flex; justify-content: center; align-items: center; }
.resizer span { width: 24px; height: 5px; background: repeating-linear-gradient(transparent 0 1px, #eee 1px 2px), repeating-linear-gradient(90deg, #666 0 1px, transparent 1px 2px); }

.record { display: flex; align-items: flex-start; gap: 34px; padding: 11px 0 60px 14px; }
.sidenav { width: 258px; flex: none; list-style: none; margin: 1px 0 0; padding: 0; border: 1px solid #e5e5e5; border-radius: 6px; background: #fff; box-shadow: 0 1px 4px rgba(0,0,0,.065); font-size: 12px; color: #337ab7; }
.sidenav li { height: 28px; border-bottom: 1px solid #e5e5e5; }
.sidenav li.counted { height: 29px; }
.sidenav a { display: flex; align-items: center; height: 100%; padding: 0 5px 0 10px; background: no-repeat right 5px center / 8px 12px url("data:image/svg+xml,%3Csvg xmlns='http://www.w3.org/2000/svg' viewBox='0 0 8 12'%3E%3Cpath fill='none' stroke='%23e6e6e6' stroke-width='3' d='M1.300 1.300L6 6l-4.700 4.700'/%3E%3C/svg%3E"); }
.sidenav .badge { margin: 0 16px 0 auto; }
.editor { flex: 1; min-width: 0; background: #fff; border: 1px solid #ddd; border-width: 1px 0 0 1px; border-radius: 6px 0 0 0; box-shadow: 0 0 4px rgba(0,0,0,.12); }
.actions { display: flex; height: 38px; align-items: center; padding: 0 4px 0 5px; background: linear-gradient(#f3f3f3, #ececec); border-radius: 5px 0 0 0; }
.actiongrid { display: grid; grid-template-columns: 110px 85px 79px 107px 66px 66px 77px 75px 58px; }
.actiongrid > * + * { margin-left: -1px; }
.sm { height: 30px; font-size: 12px; line-height: 18px; gap: 2px; background: #fff; border: 1px solid #ccc; color: #333; }
.primary { width: 49px; background: #74a1cb; border-color: #6c9ac5; color: #fff; border-radius: 3px; }
.warning { background: #f0ad4e; border-color: #eea236; color: #fff; }
.danger { background: #d9534f; border-color: #d43f3a; color: #fff; border-radius: 0 3px 3px 0; }
.form { padding: 0 9px 0 10px; }
.heading { display: flex; align-items: flex-start; height: 63px; padding-top: 7px; }
h2, h3 { margin: 0; font-weight: 400; color: #333; }
h2 { font-size: 30px; line-height: 40px; }
.label { margin-left: 9px; height: 20px; padding: 0 7px; font: bold 12px/18px "Liberation Sans", sans-serif; color: #fff; background: #5bc0de; border-radius: 3px; }
.heading .help { margin-top: 5px; }
.section { display: flex; align-items: center; height: 35px; padding: 0 6px 0 10px; margin-bottom: 14px; background: linear-gradient(#f3f3f3, #ebebeb); border-bottom: 1px solid #d8d8d8; }
.section .help { margin-top: -4px; }
h3 { font-size: 24px; line-height: 32px; }
.frow { display: flex; align-items: flex-start; gap: 15px; margin-bottom: 8px; }
label { width: 140px; flex: none; display: flex; justify-content: flex-end; text-align: right; font-weight: 700; padding: 7px 17px 0 20px; border-bottom: 1px dotted #ddd; position: relative; }
.req { position: absolute; right: 1px; top: 9px; width: 10px; height: 10px; }
.req.mid { top: 20px; }
textarea.field { width: 602px; height: 91px; resize: vertical; display: block; }
.ids { display: flex; gap: 4px; }
.ids .field { width: 110px; }
.field:disabled { background: #eee; }
.pick { position: relative; }
.pick .field { width: 250px; padding: 6px 16px; appearance: none; display: block; }
.pick::after { content: ""; position: absolute; right: 0; top: 1px; width: 18px; height: 32px; border: 1px solid #707070; border-radius: 1px; background: linear-gradient(45deg, transparent 50%, #000 50%) no-repeat 4px 13px / 4px 4px, linear-gradient(-45deg, transparent 50%, #000 50%) no-repeat 8px 13px / 4px 4px, linear-gradient(90deg, #f4f4f4, #d4d4d4); pointer-events: none; }

.scrollbar { width: 17px; flex: none; display: flex; flex-direction: column; align-items: center; background: #f0f0f0; border-left: 1px solid #e2e2e2; }
.up, .dn { border: 4px solid transparent; height: 0; }
.up { border-bottom: 4px solid #333; border-top: 0; margin: 7px 0; }
.dn { border-top: 4px solid #333; border-bottom: 0; margin: auto 0 6px; }
.thumb { width: 15px; height: 126px; border: 1px solid #979797; border-radius: 2px; background: linear-gradient(90deg, #f5f5f5, #e4e4e4 50%, #cfcfcf); display: flex; align-items: center; justify-content: center; }
.thumb b { width: 7px; height: 8px; background: repeating-linear-gradient(#555 0 1px, transparent 1px 3px); }
```
